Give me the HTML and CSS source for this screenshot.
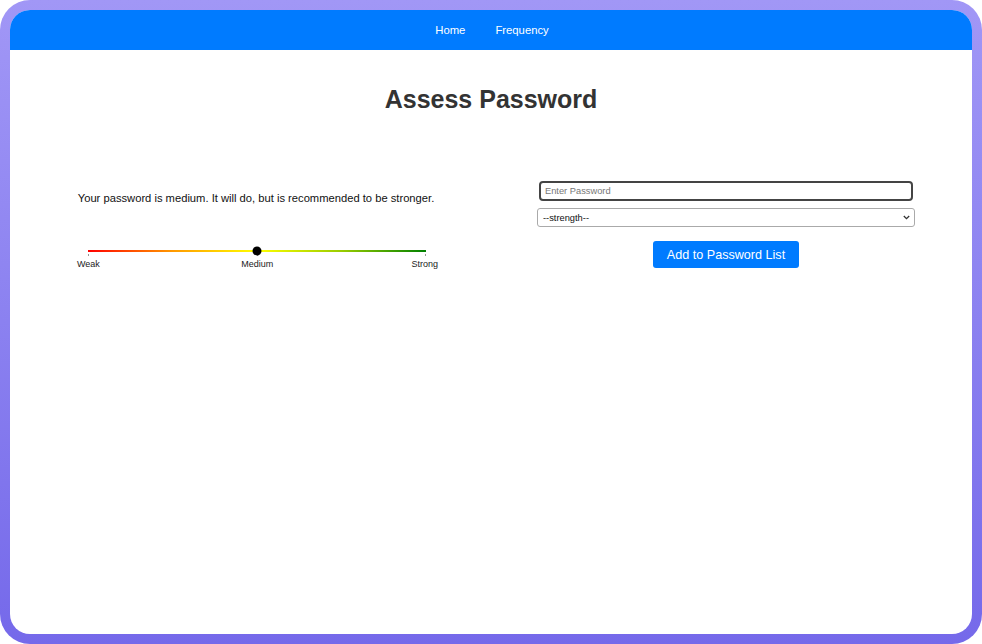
FILE: index.html
```html
<!DOCTYPE html>
<html>
<head>
<meta charset="utf-8">
<link rel="stylesheet" href="styles.css">
</head>
<body>
<div class="frame">
  <div class="panel">
    <nav class="navbar">
      <a class="nav-link" href="#">Home</a>
      <a class="nav-link" href="#">Frequency</a>
    </nav>
    <h1 class="title">Assess Password</h1>
    <div class="columns">
      <div class="col-left">
        <p class="message">Your password is medium. It will do, but is recommended to be stronger.</p>
        <div class="meter">
          <div class="track">
            <span class="tick tick-start"></span>
            <span class="tick tick-mid"></span>
            <span class="tick tick-end"></span>
            <span class="dot"></span>
          </div>
          <div class="labels">
            <span>Weak</span>
            <span>Medium</span>
            <span>Strong</span>
          </div>
        </div>
      </div>
      <div class="col-right">
        <input class="pw-input" type="text" placeholder="Enter Password">
        <div class="select-wrap">
          <select class="pw-select">
            <option>--strength--</option>
          </select>
          <svg class="chevron" width="7" height="5" viewBox="0 0 7 5"><path d="M0.8 1 L3.5 3.6 L6.2 1" fill="none" stroke="#333" stroke-width="1.3"/></svg>
        </div>
        <button class="btn-add">Add to Password List</button>
      </div>
    </div>
  </div>
</div>
</body>
</html>
```

FILE: styles.css
```css
* { box-sizing: border-box; }
html, body {
  margin: 0;
  padding: 0;
  width: 982px;
  height: 644px;
  overflow: hidden;
  background: #ffffff;
}
body {
  font-family: "Liberation Sans", Arial, sans-serif;
}
.frame {
  width: 982px;
  height: 644px;
  padding: 10px;
  border-radius: 30px;
  background: linear-gradient(180deg, #a197f6 0%, #8b81f0 50%, #7569ea 100%);
}
.panel {
  width: 962px;
  height: 624px;
  background: #ffffff;
  border-radius: 20px;
  overflow: hidden;
}
.navbar {
  height: 40px;
  background: #007bff;
  display: flex;
  justify-content: center;
  align-items: center;
  gap: 30px;
  padding-left: 2px;
}
.nav-link {
  color: #ffffff;
  text-decoration: none;
  font-size: 11.3px;
}
.title {
  margin: 36px 0 0;
  text-align: center;
  font-size: 25px;
  font-weight: bold;
  color: #333333;
  line-height: 26px;
}
.columns {
  display: grid;
  grid-template-columns: 420px 420px;
  column-gap: 50px;
  padding: 0 36px;
  margin-top: 69px;
}
.col-left {
  display: flex;
  flex-direction: column;
  align-items: center;
  padding-top: 9px;
}
.message {
  margin: 0;
  font-size: 11.2px;
  color: #111111;
  line-height: 16px;
}
.meter {
  margin-top: 44px;
  width: 362px;
  display: flex;
  flex-direction: column;
  align-items: center;
  margin-left: 2px;
}
.track {
  position: relative;
  width: 338px;
  height: 2px;
  background: linear-gradient(90deg, #ff0000 0%, #ff9900 25%, #ffff00 50%, #99cc00 75%, #008000 100%);
}
.tick {
  position: absolute;
  top: 4px;
  width: 1px;
  height: 2px;
  background: #999999;
}
.tick-start { left: 0; }
.tick-mid { left: 169px; }
.tick-end { right: 0; }
.dot {
  position: absolute;
  left: 169px;
  top: 1px;
  width: 9px;
  height: 9px;
  border-radius: 50%;
  background: #000000;
  transform: translate(-50%, -50%);
}
.labels {
  width: 362px;
  margin-top: 7px;
  display: flex;
  justify-content: space-between;
  font-size: 9px;
  color: #222222;
  line-height: 10px;
}
.labels span:first-child { margin-left: 1px; }
.labels span:nth-child(2) { margin-left: 3px; }
.col-right {
  display: flex;
  flex-direction: column;
  align-items: center;
}
.pw-input {
  width: 374px;
  height: 20px;
  border: 2px solid #444444;
  border-radius: 4px;
  padding: 0 4px;
  font-family: "Liberation Sans", Arial, sans-serif;
  font-size: 9.3px;
  outline: none;
}
.pw-input::placeholder { color: #777777; }
.select-wrap {
  position: relative;
  margin-top: 7px;
  width: 378px;
  height: 19px;
}
.pw-select {
  -webkit-appearance: none;
  appearance: none;
  display: block;
  width: 378px;
  height: 19px;
  border: 1px solid #aaaaaa;
  border-radius: 3px;
  padding: 0 5px;
  font-family: "Liberation Sans", Arial, sans-serif;
  font-size: 9.3px;
  color: #111111;
  background: #ffffff;
}
.chevron {
  position: absolute;
  right: 5px;
  top: 7px;
  pointer-events: none;
}
.btn-add {
  margin-top: 14px;
  height: 27px;
  width: 146px;
  background: #007bff;
  color: #ffffff;
  border: none;
  border-radius: 3px;
  font-family: "Liberation Sans", Arial, sans-serif;
  font-size: 12.6px;
  padding: 0;
}
```
